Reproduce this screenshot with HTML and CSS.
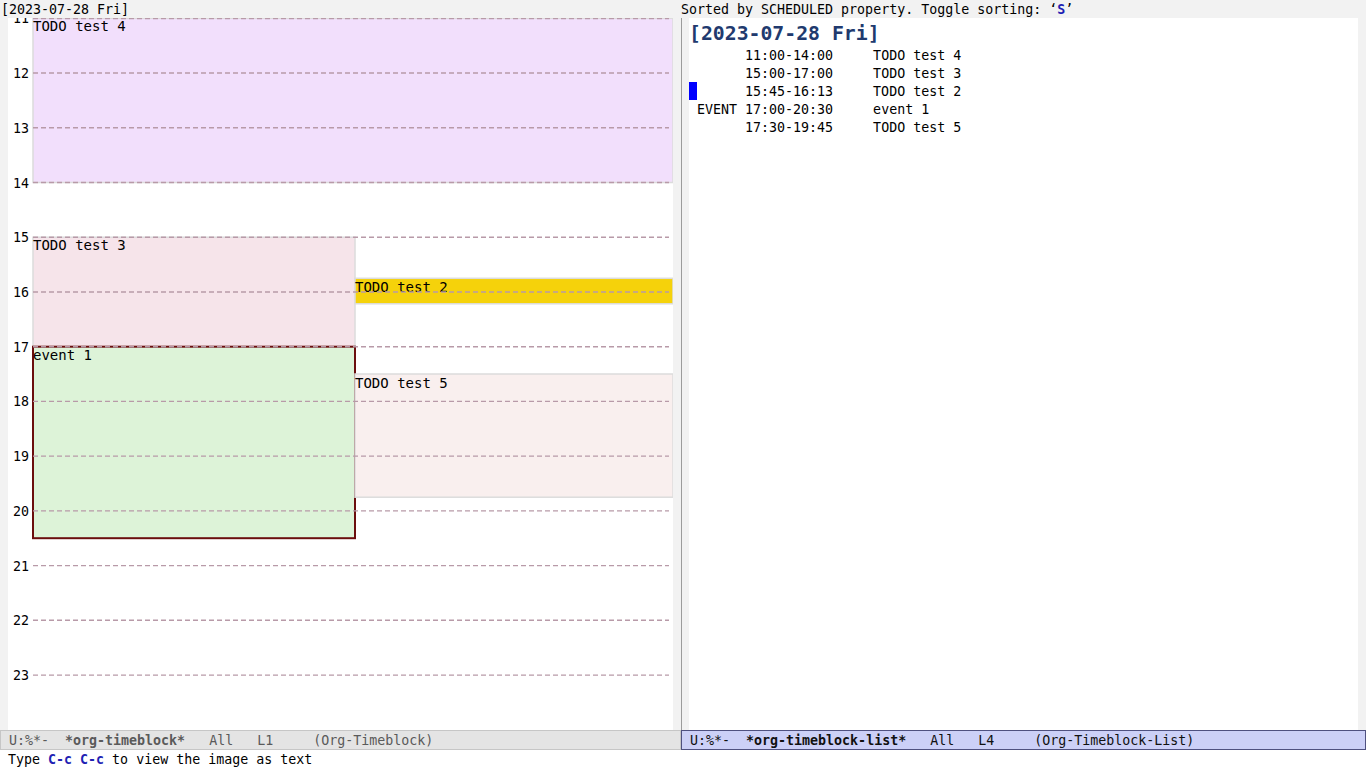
FILE: index.html
```html
<!DOCTYPE html>
<html>
<head>
<meta charset="utf-8">
<title>org-timeblock</title>
<link rel="stylesheet" href="styles.css">
</head>
<body>
<div class="frame">
  <div class="windows">
    <div class="win win-left">
      <div class="header-line header-left">[2023-07-28 Fri]</div>
      <div class="win-body">
        <div class="fringe"></div>
        <div class="text-area image-area">
          <svg class="timeline" width="665" height="712" viewBox="0 0 665 712" xmlns="http://www.w3.org/2000/svg">
            <rect x="25" y="0.3" width="640" height="164.2" fill="#f2dffc" stroke="#dcdcdc" stroke-width="1.5"/>
            <rect x="25" y="219.2" width="322" height="109.5" fill="#f6e4ea" stroke="#dcdcdc" stroke-width="1.5"/>
            <rect x="347" y="260.3" width="318" height="25.5" fill="#f5d20b" stroke="#dcdcdc" stroke-width="1.5"/>
            <rect x="25" y="328.7" width="322" height="191.5" fill="#ddf3d8" stroke="#6b0e0e" stroke-width="2"/>
            <rect x="347" y="356" width="318" height="123.2" fill="#f9efee" stroke="#dcdcdc" stroke-width="1.5"/>
            <g class="blk-label">
              <text x="25" y="13.3">TODO test 4</text>
              <text x="25" y="232.2">TODO test 3</text>
              <text x="347" y="273.8">TODO test 2</text>
              <text x="25" y="341.7">event 1</text>
              <text x="347" y="369.5">TODO test 5</text>
            </g>
            <g class="hour-lines" stroke="#b89aa8" stroke-width="1.4" stroke-dasharray="5 3">
              <line x1="25" y1="0.5" x2="661" y2="0.5"/>
              <line x1="25" y1="55" x2="661" y2="55"/>
              <line x1="25" y1="109.8" x2="661" y2="109.8"/>
              <line x1="25" y1="164.5" x2="661" y2="164.5"/>
              <line x1="25" y1="219.2" x2="661" y2="219.2"/>
              <line x1="25" y1="274" x2="661" y2="274"/>
              <line x1="25" y1="328.7" x2="661" y2="328.7"/>
              <line x1="25" y1="383.4" x2="661" y2="383.4"/>
              <line x1="25" y1="438.1" x2="661" y2="438.1"/>
              <line x1="25" y1="492.9" x2="661" y2="492.9"/>
              <line x1="25" y1="547.6" x2="661" y2="547.6"/>
              <line x1="25" y1="602.3" x2="661" y2="602.3"/>
              <line x1="25" y1="657.1" x2="661" y2="657.1"/>
            </g>
            <g class="hour-label">
              <text x="5" y="5.3">11</text>
              <text x="5" y="60">12</text>
              <text x="5" y="114.8">13</text>
              <text x="5" y="169.5">14</text>
              <text x="5" y="224.2">15</text>
              <text x="5" y="279">16</text>
              <text x="5" y="333.7">17</text>
              <text x="5" y="388.4">18</text>
              <text x="5" y="443.1">19</text>
              <text x="5" y="497.9">20</text>
              <text x="5" y="552.6">21</text>
              <text x="5" y="607.3">22</text>
              <text x="5" y="662.1">23</text>
            </g>
          </svg>
        </div>
        <div class="fringe"></div>
      </div>
      <div class="mode-line inactive">U:%*-  <b>*org-timeblock*</b>   All   L1     (Org-Timeblock)</div>
    </div>
    <div class="win win-right">
      <div class="header-line">Sorted by SCHEDULED property. Toggle sorting: ‘<b class="key">S</b>’</div>
      <div class="win-body divided">
        <div class="fringe fringe-narrow"></div>
        <div class="text-area list">
          <div class="date-line">[2023-07-28 Fri]</div>
          <div class="row">       11:00-14:00     TODO test 4</div>
          <div class="row">       15:00-17:00     TODO test 3</div>
          <div class="row"><span class="cursor"> </span>      15:45-16:13     TODO test 2</div>
          <div class="row"> EVENT 17:00-20:30     event 1</div>
          <div class="row">       17:30-19:45     TODO test 5</div>
        </div>
        <div class="fringe"></div>
      </div>
      <div class="mode-line active">U:%*-  <b>*org-timeblock-list*</b>   All   L4     (Org-Timeblock-List)</div>
    </div>
  </div>
  <div class="echo">Type <b class="key">C-c</b> <b class="key">C-c</b> to view the image as text</div>
</div>
</body>
</html>
```

FILE: styles.css
```css
html, body {
  margin: 0;
  padding: 0;
  background: #ffffff;
}

body {
  font-family: "DejaVu Sans Mono", "Liberation Mono", monospace;
  font-size: 13.3px;
  line-height: 20px;
  color: #000000;
}

.frame {
  width: 1366px;
  height: 768px;
  display: flex;
  flex-direction: column;
  overflow: hidden;
}

.windows {
  display: flex;
  height: 750px;
}

.win {
  display: flex;
  flex-direction: column;
}

.win-left {
  width: 681px;
}

.win-right {
  width: 685px;
}

.header-line {
  height: 18px;
  background: #f2f2f2;
  white-space: pre;
  overflow: hidden;
}

.header-left {
  padding-left: 1px;
}

.win-body {
  display: flex;
  height: 712px;
}

.win-body.divided {
  border-left: 1px solid #9c9c9c;
}

.fringe {
  width: 8px;
  flex: none;
  background: #f2f2f2;
}

.fringe-narrow {
  width: 7px;
}

.text-area {
  flex: 1;
  background: #ffffff;
  overflow: hidden;
}

.timeline {
  display: block;
}

.blk-label text {
  font-family: "DejaVu Sans Mono", monospace;
  font-size: 14px;
  fill: #000000;
}

.hour-label text {
  font-family: "DejaVu Sans Mono", monospace;
  font-size: 13.3px;
  fill: #000000;
}

.date-line {
  height: 28px;
  line-height: 32px;
  font-size: 19.8px;
  font-weight: bold;
  color: #213a6e;
  white-space: pre;
}

.row {
  height: 18px;
  white-space: pre;
}

.cursor {
  display: inline-block;
  width: 8px;
  height: 18px;
  vertical-align: top;
  background: #0000ff;
}

.mode-line {
  height: 18px;
  white-space: pre;
  padding-left: 8px;
  overflow: hidden;
}

.mode-line.inactive {
  background: #e4e4e4;
  color: #5a5a5a;
  border: 1px solid #c6c6c6;
}

.mode-line.active {
  background: #ccd0f7;
  color: #111111;
  border: 1px solid #4f5180;
}

.key {
  color: #1f1fb4;
  font-weight: bold;
}

.echo {
  height: 18px;
  padding-left: 8px;
  white-space: pre;
}
```
